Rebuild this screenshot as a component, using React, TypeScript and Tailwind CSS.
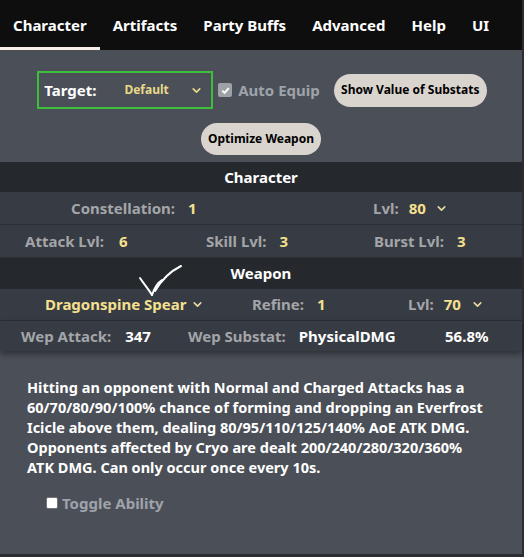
import { ChevronDown } from "lucide-react";

const tabs = ["Character", "Artifacts", "Party Buffs", "Advanced", "Help", "UI"];

const Chev = ({ className = "" }: { className?: string }) => (
  <ChevronDown className={"w-[13px] h-[13px] " + className} strokeWidth={3} />
);

const Label = ({ children }: { children: React.ReactNode }) => (
  <span className="text-[#a3a5a8]">{children}</span>
);

const Val = ({ children }: { children: React.ReactNode }) => (
  <span className="ml-[13px] text-[#f4e08f]">{children}</span>
);

const Row = ({ children, className = "" }: { children: React.ReactNode; className?: string }) => (
  <div className={"flex items-center bg-[#373b43] border-b border-[#2c2f35] " + className}>{children}</div>
);

const Header = ({ title, className = "" }: { title: string; className?: string }) => (
  <div className={"flex items-center justify-center bg-[#25282d] text-white " + className}>{title}</div>
);

export default function App() {
  return (
    <div
      className="w-[524px] h-[557px] bg-[#2a2d32] font-bold text-[15px] overflow-hidden"
      style={{ fontFamily: "'Noto Sans', 'Liberation Sans', sans-serif" }}
    >
      <div className="w-[522px] h-[554px] bg-[#4b4f57] flex flex-col relative">
        {/* nav */}
        <nav className="flex h-[50px] bg-[#0e0e0e] shrink-0">
          {tabs.map((t, i) => (
            <div key={t} className="relative flex items-center px-[13px] text-white text-[15px]">
              {t}
              {i === 0 && <span className="absolute left-0 right-0 bottom-0 h-[3px] bg-[#f8ede8]" />}
            </div>
          ))}
        </nav>

        {/* controls */}
        <div className="flex flex-col items-center pt-[21px] pb-[7px] gap-[14px]">
          <div className="flex items-center h-[38px] ml-[2px]">
            <div className="flex items-center w-[176px] h-[38px] border-2 border-[#3dbf3b] pl-[5px]">
              <span className="text-white text-[15px]">Target:</span>
              <div className="flex items-center flex-1 pl-[28px] pr-[8px] text-[#e8d98a] text-[12px]">
                <span>Default</span>
                <Chev className="ml-auto" />
              </div>
            </div>
            <span className="ml-[5px] flex items-center justify-center w-[14px] h-[14px] rounded-[2px] bg-[#9ea1a6]">
              <svg viewBox="0 0 12 12" className="w-[11px] h-[11px]">
                <path d="M2.5 6.2 L5 8.6 L9.6 3.4" fill="none" stroke="white" strokeWidth="2" />
              </svg>
            </span>
            <span className="ml-[6px] text-[#9ea3ab]">Auto Equip</span>
            <button className="ml-[14px] h-[33px] w-[153px] rounded-full bg-[#d9d4ce] text-black text-[12px]">
              Show Value of Substats
            </button>
          </div>
          <button className="h-[32px] w-[120px] rounded-full bg-[#d9d4ce] text-black text-[12px]">
            Optimize Weapon
          </button>
        </div>

        {/* character */}
        <Header title="Character" className="h-[30px]" />
        <Row className="h-[33px]">
          <div className="w-[373px] pl-[71px] flex items-center">
            <Label>Constellation:</Label>
            <Val>1</Val>
          </div>
          <div className="flex items-center">
            <Label>Lvl:</Label>
            <span className="ml-[10px] text-[#f4e08f]">80</span>
            <Chev className="ml-[9px] text-[#e8d9a0]" />
          </div>
        </Row>
        <Row className="h-[33px]">
          <div className="w-[206px] pl-[25px] flex items-center">
            <Label>Attack Lvl:</Label>
            <span className="ml-[15px] text-[#f4e08f]">6</span>
          </div>
          <div className="w-[168px] flex items-center">
            <Label>Skill Lvl:</Label>
            <Val>3</Val>
          </div>
          <div className="flex items-center">
            <Label>Burst Lvl:</Label>
            <Val>3</Val>
          </div>
        </Row>

        {/* weapon */}
        <Header title="Weapon" className="h-[31px]" />
        <Row className="h-[32px]">
          <div className="w-[252px] pl-[45px] flex items-center">
            <span className="text-[#f4e08f]">Dragonspine Spear</span>
            <Chev className="ml-[5px] text-[#e8d9a0]" />
          </div>
          <div className="w-[156px] flex items-center">
            <Label>Refine:</Label>
            <Val>1</Val>
          </div>
          <div className="flex items-center">
            <Label>Lvl:</Label>
            <span className="ml-[10px] text-[#f4e08f]">70</span>
            <Chev className="ml-[10px] text-[#e8d9a0]" />
          </div>
        </Row>
        <div className="flex items-center h-[30px] bg-[#373b43] shadow-[0_3px_6px_rgba(0,0,0,0.4)] relative">
          <div className="w-[188px] pl-[21px] flex items-center">
            <Label>Wep Attack:</Label>
            <span className="ml-[14px] text-white">347</span>
          </div>
          <div className="w-[257px] flex items-center">
            <Label>Wep Substat:</Label>
            <span className="ml-[13px] text-white">PhysicalDMG</span>
          </div>
          <span className="text-white">56.8%</span>
        </div>

        {/* hand-drawn mark */}
        <svg className="absolute left-[135px] top-[262px] w-[50px] h-[36px]" viewBox="0 0 50 36" fill="none">
          <path d="M5 16 C9 22 14 28 17 33" stroke="white" strokeWidth="2" strokeLinecap="round" />
          <path d="M17 33 C19 27 22 21 27 18" stroke="white" strokeWidth="2" strokeLinecap="round" />
          <path d="M20 29 C27 17 36 9 46 4" stroke="white" strokeWidth="2" strokeLinecap="round" />
        </svg>

        {/* description */}
        <div className="px-[27px] pt-[26px] text-white text-[14.5px] leading-[20px] whitespace-nowrap">
          Hitting an opponent with Normal and Charged Attacks has a<br />
          60/70/80/90/100% chance of forming and dropping an Everfrost<br />
          Icicle above them, dealing 80/95/110/125/140% AoE ATK DMG.<br />
          Opponents affected by Cryo are dealt 200/240/280/320/360%<br />
          ATK DMG. Can only occur once every 10s.
        </div>

        <label className="flex items-center mt-[15px] ml-[46px] text-[#9ea3ab]">
          <span className="w-[12px] h-[12px] bg-white rounded-[2px] border border-[#767676]" />
          <span className="ml-[4px]">Toggle Ability</span>
        </label>
      </div>
    </div>
  );
}
